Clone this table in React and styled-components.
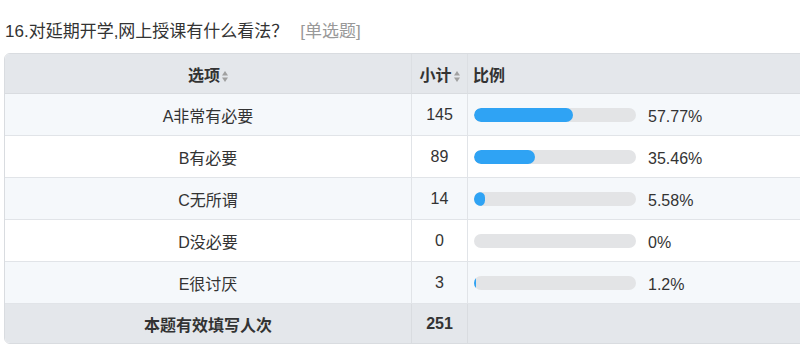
import React from "react";
import styled, { createGlobalStyle } from "styled-components";

const Global = createGlobalStyle`
  html, body { margin: 0; padding: 0; background: #fff; }
  body { font-family: "Liberation Sans", "Noto Sans CJK SC", sans-serif; color: #333; }
`;

const Page = styled.div`
  width: 800px;
  height: 348px;
  overflow: hidden;
  padding: 20px 0 0 4px;
  box-sizing: border-box;
`;

const Title = styled.div`
  font-size: 17px;
  line-height: 24px;
  height: 24px;
  padding-left: 1px;
  margin-bottom: 9px;
  color: #333;
  white-space: nowrap;
`;

const Tag = styled.span`
  color: #999;
  margin-left: 12px;
`;

const Table = styled.table`
  width: 840px;
  border-collapse: separate;
  border-spacing: 0;
  border: 1px solid #d9dce0;
  border-radius: 6px;
  overflow: hidden;
  table-layout: fixed;
  font-size: 16px;
`;

const Th = styled.th`
  background: #e4e7eb;
  height: 39px;
  padding: 0 ${(p) => (p.$left ? "5px" : "0")};
  font-weight: bold;
  color: #333;
  text-align: ${(p) => (p.$left ? "left" : "center")};
  border-bottom: 1px solid #d9dce0;
  border-right: ${(p) => (p.$last ? "none" : "1px solid #dcdfe3")};
  white-space: nowrap;
`;

const Td = styled.td`
  background: ${(p) => (p.$odd ? "#f5f8fb" : "#ffffff")};
  height: 41px;
  padding: 0 ${(p) => (p.$left ? "6px" : "0")};
  color: #333;
  text-align: ${(p) => (p.$left ? "left" : "center")};
  border-bottom: 1px solid #e1e4e8;
  border-right: ${(p) => (p.$last ? "none" : "1px solid #e1e4e8")};
  white-space: nowrap;
`;

const FootTd = styled.td`
  background: #e4e7eb;
  height: 39px;
  padding: 0;
  font-weight: bold;
  color: #333;
  text-align: center;
  border-right: ${(p) => (p.$last ? "none" : "1px solid #d9dce0")};
`;

const SortIcon = styled.svg`
  width: 6px;
  height: 11px;
  margin-left: 2px;
  vertical-align: -1px;
`;

const BarCell = styled.div`
  display: flex;
  align-items: center;
  gap: 12px;
`;

const Track = styled.div`
  width: 162px;
  height: 14px;
  border-radius: 7px;
  background: #e3e4e6;
  overflow: hidden;
  flex: none;
`;

const Fill = styled.div`
  height: 100%;
  border-radius: ${(p) => (p.$thin ? "1px" : "7px")};
  background: #2fa3f4;
`;

const Pct = styled.span`
  font-size: 16px;
  color: #333;
  padding-top: 5px;
`;

const Sort = () => (
  <SortIcon viewBox="0 0 6 11">
    <path d="M3 0 L6 4.5 L0 4.5 Z" fill="#a0a0a0" />
    <path d="M3 11 L6 6.5 L0 6.5 Z" fill="#a0a0a0" />
  </SortIcon>
);

const rows = [
  { label: "A非常有必要", count: 145, pct: "57.77%", fill: 99 },
  { label: "B有必要", count: 89, pct: "35.46%", fill: 61 },
  { label: "C无所谓", count: 14, pct: "5.58%", fill: 11 },
  { label: "D没必要", count: 0, pct: "0%", fill: 0 },
  { label: "E很讨厌", count: 3, pct: "1.2%", fill: 2 },
];

export default function App() {
  return (
    <Page>
      <Global />
      <Title>
        16.对延期开学,网上授课有什么看法？<Tag>[单选题]</Tag>
      </Title>
      <Table>
        <colgroup>
          <col style={{ width: 407 }} />
          <col style={{ width: 56 }} />
          <col />
        </colgroup>
        <thead>
          <tr>
            <Th>
              选项
              <Sort />
            </Th>
            <Th>
              小计
              <Sort />
            </Th>
            <Th $left $last>
              比例
            </Th>
          </tr>
        </thead>
        <tbody>
          {rows.map((r, i) => (
            <tr key={r.label}>
              <Td $odd={i % 2 === 0}>{r.label}</Td>
              <Td $odd={i % 2 === 0}>{r.count}</Td>
              <Td $odd={i % 2 === 0} $left $last>
                <BarCell>
                  <Track>
                    <Fill $thin={r.fill < 4} style={{ width: r.fill }} />
                  </Track>
                  <Pct>{r.pct}</Pct>
                </BarCell>
              </Td>
            </tr>
          ))}
          <tr>
            <FootTd>本题有效填写人次</FootTd>
            <FootTd>251</FootTd>
            <FootTd $last></FootTd>
          </tr>
        </tbody>
      </Table>
    </Page>
  );
}
